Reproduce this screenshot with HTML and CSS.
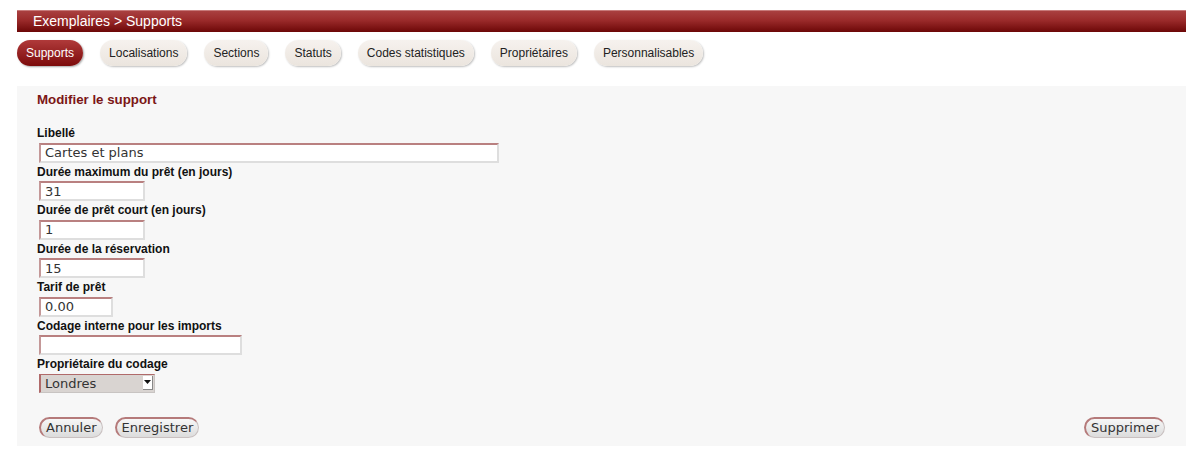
FILE: index.html
```html
<!DOCTYPE html>
<html lang="fr">
<head>
<meta charset="utf-8">
<title>Exemplaires &gt; Supports</title>
<link rel="stylesheet" href="styles.css">
</head>
<body>
<div class="page">
  <div class="header">Exemplaires &gt; Supports</div>
  <nav class="tabs">
    <span class="tab active">Supports</span>
    <span class="tab">Localisations</span>
    <span class="tab">Sections</span>
    <span class="tab">Statuts</span>
    <span class="tab">Codes statistiques</span>
    <span class="tab">Propriétaires</span>
    <span class="tab">Personnalisables</span>
  </nav>
  <form class="panel">
    <h3 class="title">Modifier le support</h3>
    <div class="fields">
      <label class="lbl">Libellé</label>
      <input class="inp w-lg" type="text" value="Cartes et plans">
      <label class="lbl">Durée maximum du prêt (en jours)</label>
      <input class="inp w-sm" type="text" value="31">
      <label class="lbl">Durée de prêt court (en jours)</label>
      <input class="inp w-sm" type="text" value="1">
      <label class="lbl">Durée de la réservation</label>
      <input class="inp w-sm" type="text" value="15">
      <label class="lbl">Tarif de prêt</label>
      <input class="inp w-xs" type="text" value="0.00">
      <label class="lbl">Codage interne pour les imports</label>
      <input class="inp w-md" type="text" value="">
      <label class="lbl">Propriétaire du codage</label>
      <div class="sel-wrap">
        <select class="sel"><option>Londres</option></select>
        <span class="sel-btn"><svg width="7" height="4" viewBox="0 0 7 4"><path d="M0 0H7L3.5 4Z" fill="#111"/></svg></span>
      </div>
    </div>
    <div class="actions">
      <div class="left">
        <button type="button" class="btn">Annuler</button>
        <button type="button" class="btn">Enregistrer</button>
      </div>
      <button type="button" class="btn">Supprimer</button>
    </div>
  </form>
</div>
</body>
</html>
```
FILE: styles.css
```css
html, body {
  margin: 0;
  padding: 0;
  background: #ffffff;
}
.page {
  padding: 10px 14px 0 17px;
  font-family: "Liberation Sans", Arial, sans-serif;
}
.header {
  height: 22px;
  box-sizing: border-box;
  padding-left: 16px;
  line-height: 21px;
  font-size: 14px;
  color: #ffffff;
  background: linear-gradient(#a94040, #9a2a2a 45%, #6c0707);
  border-top: 1px solid #c77a7a;
}
.tabs {
  display: flex;
  gap: 17px;
  margin-top: 8px;
}
.tab {
  height: 26px;
  line-height: 27px;
  padding: 0 9px;
  border-radius: 13px;
  font-size: 12px;
  color: #222;
  background: linear-gradient(#f6f2ee, #ebe5de);
  box-shadow: 1px 1px 2px rgba(0,0,0,0.25);
}
.tab.active {
  color: #ffffff;
  background: linear-gradient(#b03a3a, #7c0b0b);
  box-shadow: 1px 1px 2px rgba(0,0,0,0.35);
}
.panel {
  margin: 20px 0 0 0;
  background: #f7f7f7;
  padding: 6px 21px 8px 20px;
}
.title {
  margin: 0;
  line-height: 16px;
  font-size: 13.3px;
  font-weight: bold;
  color: #7b1616;
}
.fields {
  display: flex;
  flex-direction: column;
  align-items: flex-start;
  margin-top: 16px;
}
.lbl {
  display: block;
  line-height: 18.5px;
  font-size: 12px;
  font-weight: bold;
  color: #111;
}
.inp {
  box-sizing: border-box;
  height: 20px;
  margin: 0 0 0 2px;
  padding: 0 4px;
  font-family: "DejaVu Sans", sans-serif;
  font-size: 13px;
  color: #333;
  background: #ffffff;
  border: 2px solid;
  border-color: #c49898 #dedede #dedede #c49898;
  border-top-color: #b98080;
  outline: none;
}
.w-lg { width: 460px; }
.w-sm { width: 106px; }
.w-xs { width: 74px; }
.w-md { width: 203px; }
.sel-wrap {
  position: relative;
  margin-left: 2px;
  width: 116px;
  height: 19px;
}
.sel {
  -webkit-appearance: none;
  appearance: none;
  box-sizing: border-box;
  width: 116px;
  height: 19px;
  margin: 0;
  padding: 0 0 0 4px;
  font-family: "DejaVu Sans", sans-serif;
  font-size: 13px;
  line-height: 15px;
  color: #333;
  background: #d9d4d1;
  border: 1px solid;
  border-color: #b06a6a #c8c4c2 #c8c4c2 #b06a6a;
  border-left-width: 2px;
  border-radius: 0;
  outline: none;
}
.sel-btn {
  position: absolute;
  right: 2px;
  top: 2px;
  width: 10px;
  height: 14px;
  display: flex;
  align-items: center;
  justify-content: center;
  background: #ffffff;
  border-right: 1px solid #888;
  border-bottom: 1px solid #888;
  box-sizing: border-box;
}
.actions {
  display: flex;
  justify-content: space-between;
  align-items: center;
  margin-top: 24px;
  padding-left: 2px;
}
.left {
  display: flex;
  gap: 12px;
}
.btn {
  box-sizing: border-box;
  height: 21px;
  padding: 0 5px;
  border-radius: 11px;
  font-family: "DejaVu Sans", sans-serif;
  font-size: 13px;
  color: #333;
  background: linear-gradient(#f7f7f7, #dcdcdc);
  border: 1px solid;
  border-color: #b57a7a #c9c0c0 #c9c0c0 #b57a7a;
  border-left-width: 2px;
  border-top-width: 2px;
  cursor: pointer;
}
```
